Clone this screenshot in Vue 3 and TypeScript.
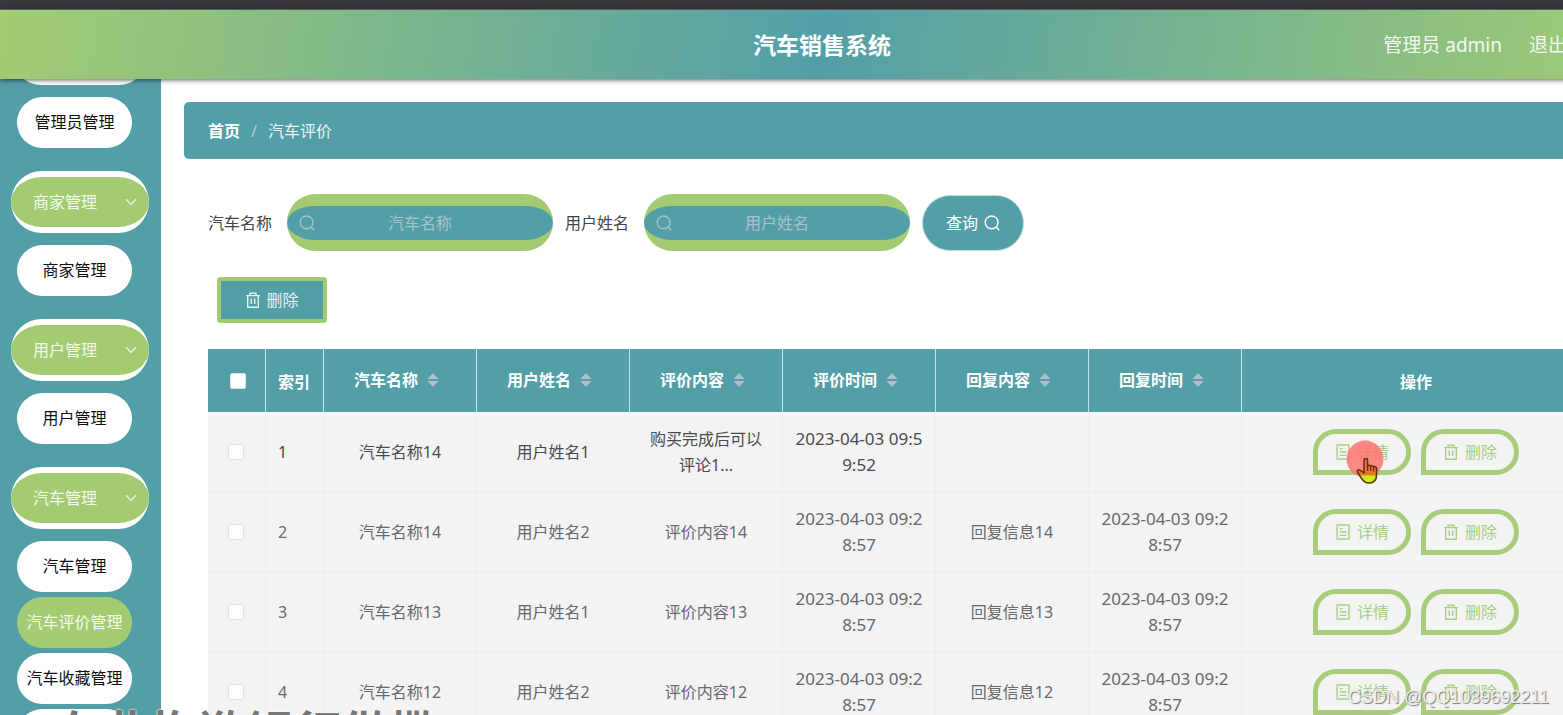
<script setup lang="ts">
import { ref } from 'vue'

interface MenuItem { label: string; active?: boolean }
interface MenuGroup { label: string; items: MenuItem[] }
interface Review {
  id: number
  car: string
  user: string
  content: string
  time: string
  reply: string
  replyTime: string
}

const groups: MenuGroup[] = [
  { label: '管理员管理', items: [{ label: '管理员管理' }] },
  { label: '商家管理', items: [{ label: '商家管理' }] },
  { label: '用户管理', items: [{ label: '用户管理' }] },
  {
    label: '汽车管理',
    items: [
      { label: '汽车管理' },
      { label: '汽车评价管理', active: true },
      { label: '汽车收藏管理' },
      { label: '汽车订单管理' },
    ],
  },
]

const columns: string[] = ['汽车名称', '用户姓名', '评价内容', '评价时间', '回复内容', '回复时间']

const rows: Review[] = [
  { id: 1, car: '汽车名称14', user: '用户姓名1', content: '购买完成后可以评论1...', time: '2023-04-03 09:59:52', reply: '', replyTime: '' },
  { id: 2, car: '汽车名称14', user: '用户姓名2', content: '评价内容14', time: '2023-04-03 09:28:57', reply: '回复信息14', replyTime: '2023-04-03 09:28:57' },
  { id: 3, car: '汽车名称13', user: '用户姓名1', content: '评价内容13', time: '2023-04-03 09:28:57', reply: '回复信息13', replyTime: '2023-04-03 09:28:57' },
  { id: 4, car: '汽车名称12', user: '用户姓名2', content: '评价内容12', time: '2023-04-03 09:28:57', reply: '回复信息12', replyTime: '2023-04-03 09:28:57' },
]

const carName = ref('')
const userName = ref('')
</script>

<template>
  <div class="viewport">
    <div class="shell">
      <div class="strip"></div>
      <header class="topbar">
        <h1>汽车销售系统</h1>
        <div class="account">
          <span>管理员 admin</span>
          <a href="#">退出登录</a>
        </div>
      </header>

      <div class="body">
        <nav class="sidebar">
          <div class="menu">
            <section v-for="g in groups" :key="g.label" class="group">
              <button type="button" class="group-title">
                <span>{{ g.label }}</span>
                <svg width="12" height="8" viewBox="0 0 12 8"><path d="M1 1.2 6 6.4 11 1.2" fill="none" stroke="currentColor" stroke-width="1.2" /></svg>
              </button>
              <div class="items">
                <a v-for="i in g.items" :key="i.label" href="#" class="item" :class="{ active: i.active }">{{ i.label }}</a>
              </div>
            </section>
          </div>
        </nav>

        <main class="main">
          <nav class="crumbs">
            <a href="#">首页</a><span class="slash">/</span><span>汽车评价</span>
          </nav>

          <form class="filters" @submit.prevent>
            <label for="car">汽车名称</label>
            <div class="field">
              <svg class="icon" viewBox="0 0 16 16"><circle cx="7.6" cy="7.4" r="6.4" /><path d="m12.2 12 3 3.2" /></svg>
              <input id="car" v-model="carName" type="text" placeholder="汽车名称" />
            </div>
            <label for="user">用户姓名</label>
            <div class="field">
              <svg class="icon" viewBox="0 0 16 16"><circle cx="7.6" cy="7.4" r="6.4" /><path d="m12.2 12 3 3.2" /></svg>
              <input id="user" v-model="userName" type="text" placeholder="用户姓名" />
            </div>
            <button type="submit" class="query">
              查询
              <svg class="icon" viewBox="0 0 16 16"><circle cx="7.6" cy="7.4" r="6.4" /><path d="m12.2 12 3 3.2" /></svg>
            </button>
          </form>

          <button type="button" class="remove">
            <svg class="icon" viewBox="0 0 16 16"><path d="M1 3.6h14M5 3.4V1.2h6v2.2M2.7 3.8v11.4h10.6V3.8M6.3 6.6v5.4M9.7 6.6v5.4" /></svg>
            删除
          </button>

          <table class="grid">
            <colgroup>
              <col class="c-small" /><col class="c-small" />
              <col v-for="c in columns" :key="c" class="c-data" />
              <col />
            </colgroup>
            <thead>
              <tr>
                <th class="pick"><input type="checkbox" aria-label="全选" /></th>
                <th class="index">索引</th>
                <th v-for="c in columns" :key="c">
                  <span class="sortable">
                    {{ c }}
                    <svg width="12" height="16" viewBox="0 0 12 16"><path d="M6 1 11.5 7H.5zM6 15 .5 9h11z" fill="#b4bfce" /></svg>
                  </span>
                </th>
                <th>操作</th>
              </tr>
            </thead>
            <tbody>
              <tr v-for="(r, n) in rows" :key="r.id" :class="{ hovered: n === 0 }">
                <td class="pick"><input type="checkbox" :aria-label="`选择 ${r.id}`" /></td>
                <td class="index">{{ r.id }}</td>
                <td>{{ r.car }}</td>
                <td>{{ r.user }}</td>
                <td>{{ r.content }}</td>
                <td class="date">{{ r.time }}</td>
                <td>{{ r.reply }}</td>
                <td class="date">{{ r.replyTime }}</td>
                <td>
                  <div class="actions">
                    <button type="button" class="op">
                      <svg class="icon" viewBox="0 0 16 16"><path d="M2 1h12v14H2zM4.6 4.6h3M4.6 8h6.8M4.6 11.4h6.8" /></svg>
                      详情
                    </button>
                    <button type="button" class="op">
                      <svg class="icon" viewBox="0 0 16 16"><path d="M1 3.6h14M5 3.4V1.2h6v2.2M2.7 3.8v11.4h10.6V3.8M6.3 6.6v5.4M9.7 6.6v5.4" /></svg>
                      删除
                    </button>
                    <svg v-if="n === 0" class="pointer" width="38" height="46" viewBox="0 0 38 46">
                      <defs>
                        <linearGradient id="hand" x1="0" y1="0" x2="0" y2="1">
                          <stop offset="0.66" stop-color="#e8722a" />
                          <stop offset="0.72" stop-color="#c9ef12" />
                        </linearGradient>
                      </defs>
                      <circle cx="19" cy="19" r="18.5" fill="#ff6f6b" fill-opacity="0.82" />
                      <path d="M18 20c0-2 3.600-2 3.600 0v6c.5-1.200 2.900-1 3.100.4.700-1 2.700-.6 2.900.6.800-.8 3-.4 3 1.500v6c0 5-2.500 8.500-7.500 8.500-4 0-5.800-1.600-7.600-4.600l-4-6.400c-.8-1.700.9-3 2.500-1.800L18 33z" fill="url(#hand)" stroke="#5c2e12" stroke-width="1.500" stroke-linejoin="round" />
                      <path d="M21.600 26v5M24.700 26.500V31M27.600 27v4.500" fill="none" stroke="#5c2e12" stroke-width="1.200" />
                    </svg>
                  </div>
                </td>
              </tr>
            </tbody>
          </table>
        </main>
      </div>
    </div>
    <div class="caption">在此抱歉银行做撒</div>
    <div class="watermark">CSDN @QQ1039692211</div>
  </div>
</template>

<style>
body {
  margin: 0;
}
</style>

<style scoped>
.viewport {
  --teal: #539fa7;
  --green: #a3cc72;
  position: relative;
  height: 100vh;
  overflow: hidden;
  background: #fff;
  font-family: "Noto Sans", "Noto Sans CJK SC", sans-serif;
  font-size: 16px;
  line-height: 26px;
}
.viewport * {
  box-sizing: border-box;
}
button,
input {
  margin: 0;
  font: inherit;
}
a {
  color: inherit;
  text-decoration: none;
}
.icon {
  flex: none;
  width: 16px;
  height: 16px;
  fill: none;
  stroke: currentColor;
  stroke-width: 1.4;
}
.shell {
  display: flex;
  flex-direction: column;
  width: calc(100% + 81px);
  height: 100%;
}
.strip {
  flex: none;
  height: 10px;
  background: #37383c;
  border-bottom: 1px solid #6d7571;
}
.topbar {
  position: relative;
  z-index: 1;
  flex: none;
  display: grid;
  grid-template-columns: 1fr auto 1fr;
  align-items: center;
  height: 69px;
  padding: 0 39px;
  background: linear-gradient(100deg, var(--green), #539fa9 50%, var(--green));
  box-shadow: 0 1px 5px rgba(0, 0, 0, 0.65);
  color: #fff;
}
.topbar h1 {
  grid-column: 2;
  margin: 0;
  font-size: 23px;
  font-weight: 700;
}
.account {
  display: flex;
  justify-content: flex-end;
  gap: 27px;
  font-size: 19px;
  color: #f3f8ee;
  white-space: nowrap;
}
.body {
  flex: 1;
  display: flex;
  min-height: 0;
}
.sidebar {
  flex: none;
  width: 161px;
  overflow: hidden;
  background: var(--teal);
}
.menu {
  display: flex;
  flex-direction: column;
  gap: 23px;
  margin-top: -56px;
}
.group {
  display: flex;
  flex-direction: column;
  gap: 12px;
}
.group-title {
  display: flex;
  align-items: center;
  justify-content: space-between;
  height: 62px;
  margin: 0 12px 0 11px;
  padding: 0 12px 0 22px;
  border: solid #fff;
  border-width: 6px 0;
  border-radius: 31px;
  background: var(--green);
  color: #f4f8ee;
  white-space: nowrap;
}
.items {
  display: flex;
  flex-direction: column;
  gap: 5px;
  padding: 0 29px 0 17px;
}
.item {
  height: 51px;
  border-radius: 26px;
  background: #fff;
  color: #111;
  line-height: 51px;
  text-align: center;
  white-space: nowrap;
}
.item.active {
  background: var(--green);
  color: #f4f8ee;
}
.main {
  flex: 1;
  min-width: 0;
  padding: 23px 23px 0;
}
.crumbs {
  display: flex;
  align-items: center;
  height: 57px;
  padding: 0 24px;
  border-radius: 5px;
  background: var(--teal);
  color: #eef4f5;
}
.crumbs a {
  font-weight: 700;
  color: #fff;
}
.slash {
  margin: 0 11px;
  color: #c0c4cc;
}
.filters {
  display: flex;
  align-items: center;
  margin: 35px 0 0 24px;
  color: #444;
}
.field {
  display: flex;
  align-items: center;
  width: 266px;
  height: 57px;
  margin: 0 12px 0 15px;
  padding: 0 12px;
  border: solid var(--green);
  border-width: 12px 0 11px;
  border-radius: 30px;
  background: var(--teal);
  color: #a9c1cb;
}
.field input {
  flex: 1;
  min-width: 0;
  padding: 0 16px 0 0;
  border: 0;
  outline: 0;
  background: none;
  color: #fff;
  text-align: center;
}
.field input::placeholder {
  color: #a9c1cb;
  opacity: 1;
}
.query {
  display: flex;
  align-items: center;
  justify-content: center;
  gap: 6px;
  width: 102px;
  height: 56px;
  padding: 0;
  border: 1px solid #c3dde0;
  border-radius: 28px;
  background: var(--teal);
  color: #fff;
}
.remove {
  display: flex;
  align-items: center;
  justify-content: center;
  gap: 5px;
  width: 110px;
  height: 46px;
  margin: 26px 0 0 33px;
  padding: 0;
  border: 4px solid var(--green);
  border-radius: 4px;
  background: var(--teal);
  color: #e8f2f2;
}
.grid {
  width: calc(100% - 54px);
  margin: 26px 0 0 24px;
  table-layout: fixed;
  border-collapse: separate;
  border-spacing: 0;
  word-break: break-all;
  text-align: center;
}
.c-small {
  width: 58px;
}
.c-data {
  width: 153px;
}
.grid th {
  height: 63px;
  padding: 2px 12px 0;
  border-right: 1px solid #c7e3ea;
  background: var(--teal);
  color: #fff;
  font-weight: 700;
}
.grid td {
  height: 80px;
  padding: 0 13px;
  border-right: 1px solid #eeeef1;
  border-bottom: 1px solid #ececef;
  background: #f3f3f4;
  color: #66686c;
}
.grid .hovered td {
  color: #4a4b4e;
}
.grid .index {
  padding-left: 12px;
  padding-right: 0;
  text-align: left;
}
.grid td.date {
  padding: 0 11px;
  font-size: 17px;
}
.grid .pick {
  padding: 0 0 0 20px;
  text-align: left;
}
.grid th.pick {
  padding-left: 22px;
}
.pick input {
  display: block;
  width: 16px;
  height: 16px;
  appearance: none;
  border: 1px solid #dfe1e6;
  border-radius: 2px;
  background: #fff;
}
.sortable {
  display: flex;
  align-items: center;
  justify-content: center;
  gap: 9px;
  padding: 0 7px 4px 0;
  white-space: nowrap;
}
.actions {
  position: relative;
  display: flex;
  justify-content: center;
  gap: 10px;
  width: 206px;
  margin: 0 auto;
}
.op {
  display: flex;
  align-items: center;
  justify-content: center;
  gap: 6px;
  width: 98px;
  height: 46px;
  padding: 0;
  border: 5px solid #a8cc7c;
  border-radius: 23px 23px 23px 0;
  background: none;
  color: #a8cf85;
}
.pointer {
  position: absolute;
  left: 33px;
  top: 11px;
}
.caption {
  position: absolute;
  left: 54px;
  bottom: -46px;
  font-size: 48px;
  font-weight: 700;
  line-height: 56px;
  color: #777;
  text-shadow: 0 0 2px #fff, 0 0 2px #fff;
  white-space: nowrap;
}
.watermark {
  position: absolute;
  right: 14px;
  bottom: 5px;
  font-family: "Liberation Sans", Arial, sans-serif;
  font-size: 18px;
  color: #ededed;
  text-shadow: 1px 1px 1px #777;
}
</style>
